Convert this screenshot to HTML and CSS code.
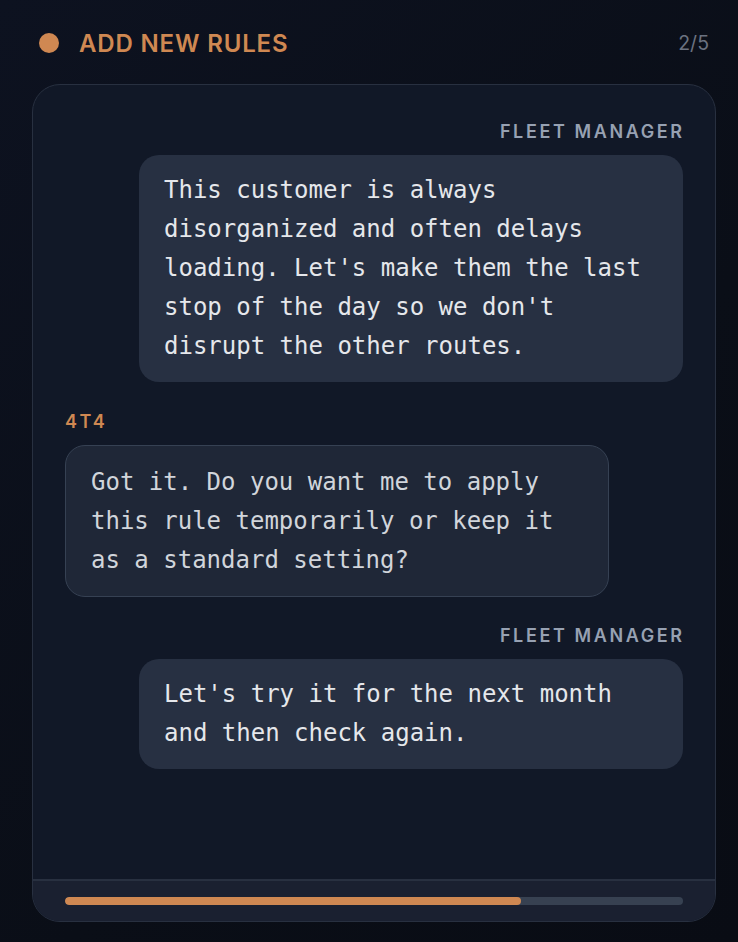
FILE: index.html
```html
<!DOCTYPE html>
<html lang="en">
<head>
<meta charset="utf-8">
<title>Add new rules</title>
<link rel="stylesheet" href="styles.css">
</head>
<body>
<div class="page">
  <header class="head">
    <div class="head-left">
      <span class="dot"></span>
      <h1 class="title">ADD NEW RULES</h1>
    </div>
    <span class="step">2/5</span>
  </header>
  <section class="card">
    <div class="chat">
      <div class="msg msg-user">
        <div class="who">FLEET MANAGER</div>
        <div class="bubble bubble-user">This customer is always disorganized and often delays loading. Let's make them the last stop of the day so we don't disrupt the other routes.</div>
      </div>
      <div class="msg msg-bot">
        <div class="who who-bot">4T4</div>
        <div class="bubble bubble-bot">Got it. Do you want me to apply this rule temporarily or keep it as a standard setting?</div>
      </div>
      <div class="msg msg-user">
        <div class="who">FLEET MANAGER</div>
        <div class="bubble bubble-user">Let's try it for the next month and then check again.</div>
      </div>
    </div>
    <footer class="foot">
      <div class="track"><div class="fill" style="width: 73.8%"></div></div>
    </footer>
  </section>
</div>
</body>
</html>
```

FILE: styles.css
```css
* { box-sizing: border-box; }
html, body { margin: 0; padding: 0; }
body {
  background: linear-gradient(135deg, #0d1220 0%, #0a0e17 60%, #090c14 100%);
  min-height: 942px;
  font-family: Inter, "Noto Sans", sans-serif;
  color: #e5e7eb;
}
.page {
  width: 738px;
  padding: 28px 22px 20px 32px;
}
.head {
  display: flex;
  align-items: center;
  justify-content: space-between;
  height: 30px;
  margin-bottom: 26px;
}
.head-left {
  display: flex;
  align-items: center;
  gap: 20px;
  padding-left: 7px;
}
.dot {
  width: 20px;
  height: 20px;
  border-radius: 50%;
  background: #cf8852;
}
.title {
  margin: 0;
  font-size: 24px;
  font-weight: 600;
  letter-spacing: 0.035em;
  color: #cf8852;
}
.step {
  font-size: 19.5px;
  color: #6b7280;
  padding-right: 7px;
}
.card {
  height: 838px;
  border: 1px solid #283040;
  border-radius: 28px;
  background: #111827;
  display: flex;
  flex-direction: column;
  overflow: hidden;
}
.chat {
  flex: 1;
  padding: 35px 32px 0 32px;
  display: flex;
  flex-direction: column;
  gap: 27.5px;
}
.msg {
  display: flex;
  flex-direction: column;
  gap: 11px;
}
.msg-user { align-items: flex-end; }
.msg-bot { align-items: flex-start; }
.who {
  font-size: 18px;
  line-height: 24px;
  font-weight: 600;
  letter-spacing: 2.6px;
  color: #97a1b2;
  margin-right: -1.6px;
}
.who-bot { color: #cf8852; margin-right: 0; }
.bubble {
  max-width: 544px;
  padding: 16px 23px 16px 25px;
  border-radius: 20px;
  font-family: "DejaVu Sans Mono", "Liberation Mono", monospace;
  font-size: 24px;
  line-height: 39px;
}
.bubble-user {
  background: #273042;
  color: #e5e7eb;
}
.bubble-bot {
  background: #1f2737;
  border: 1px solid #364153;
  color: #d1d5db;
  padding: 17px 24px 16px 25px;
}
.foot {
  height: 42px;
  border-top: 2px solid #283040;
  background: #1a2030;
  padding: 0 32px;
  display: flex;
  align-items: center;
}
.track {
  width: 100%;
  height: 8px;
  border-radius: 4px;
  background: #374151;
  overflow: hidden;
}
.fill {
  height: 100%;
  border-radius: 4px;
  background: #cf8852;
}
```
